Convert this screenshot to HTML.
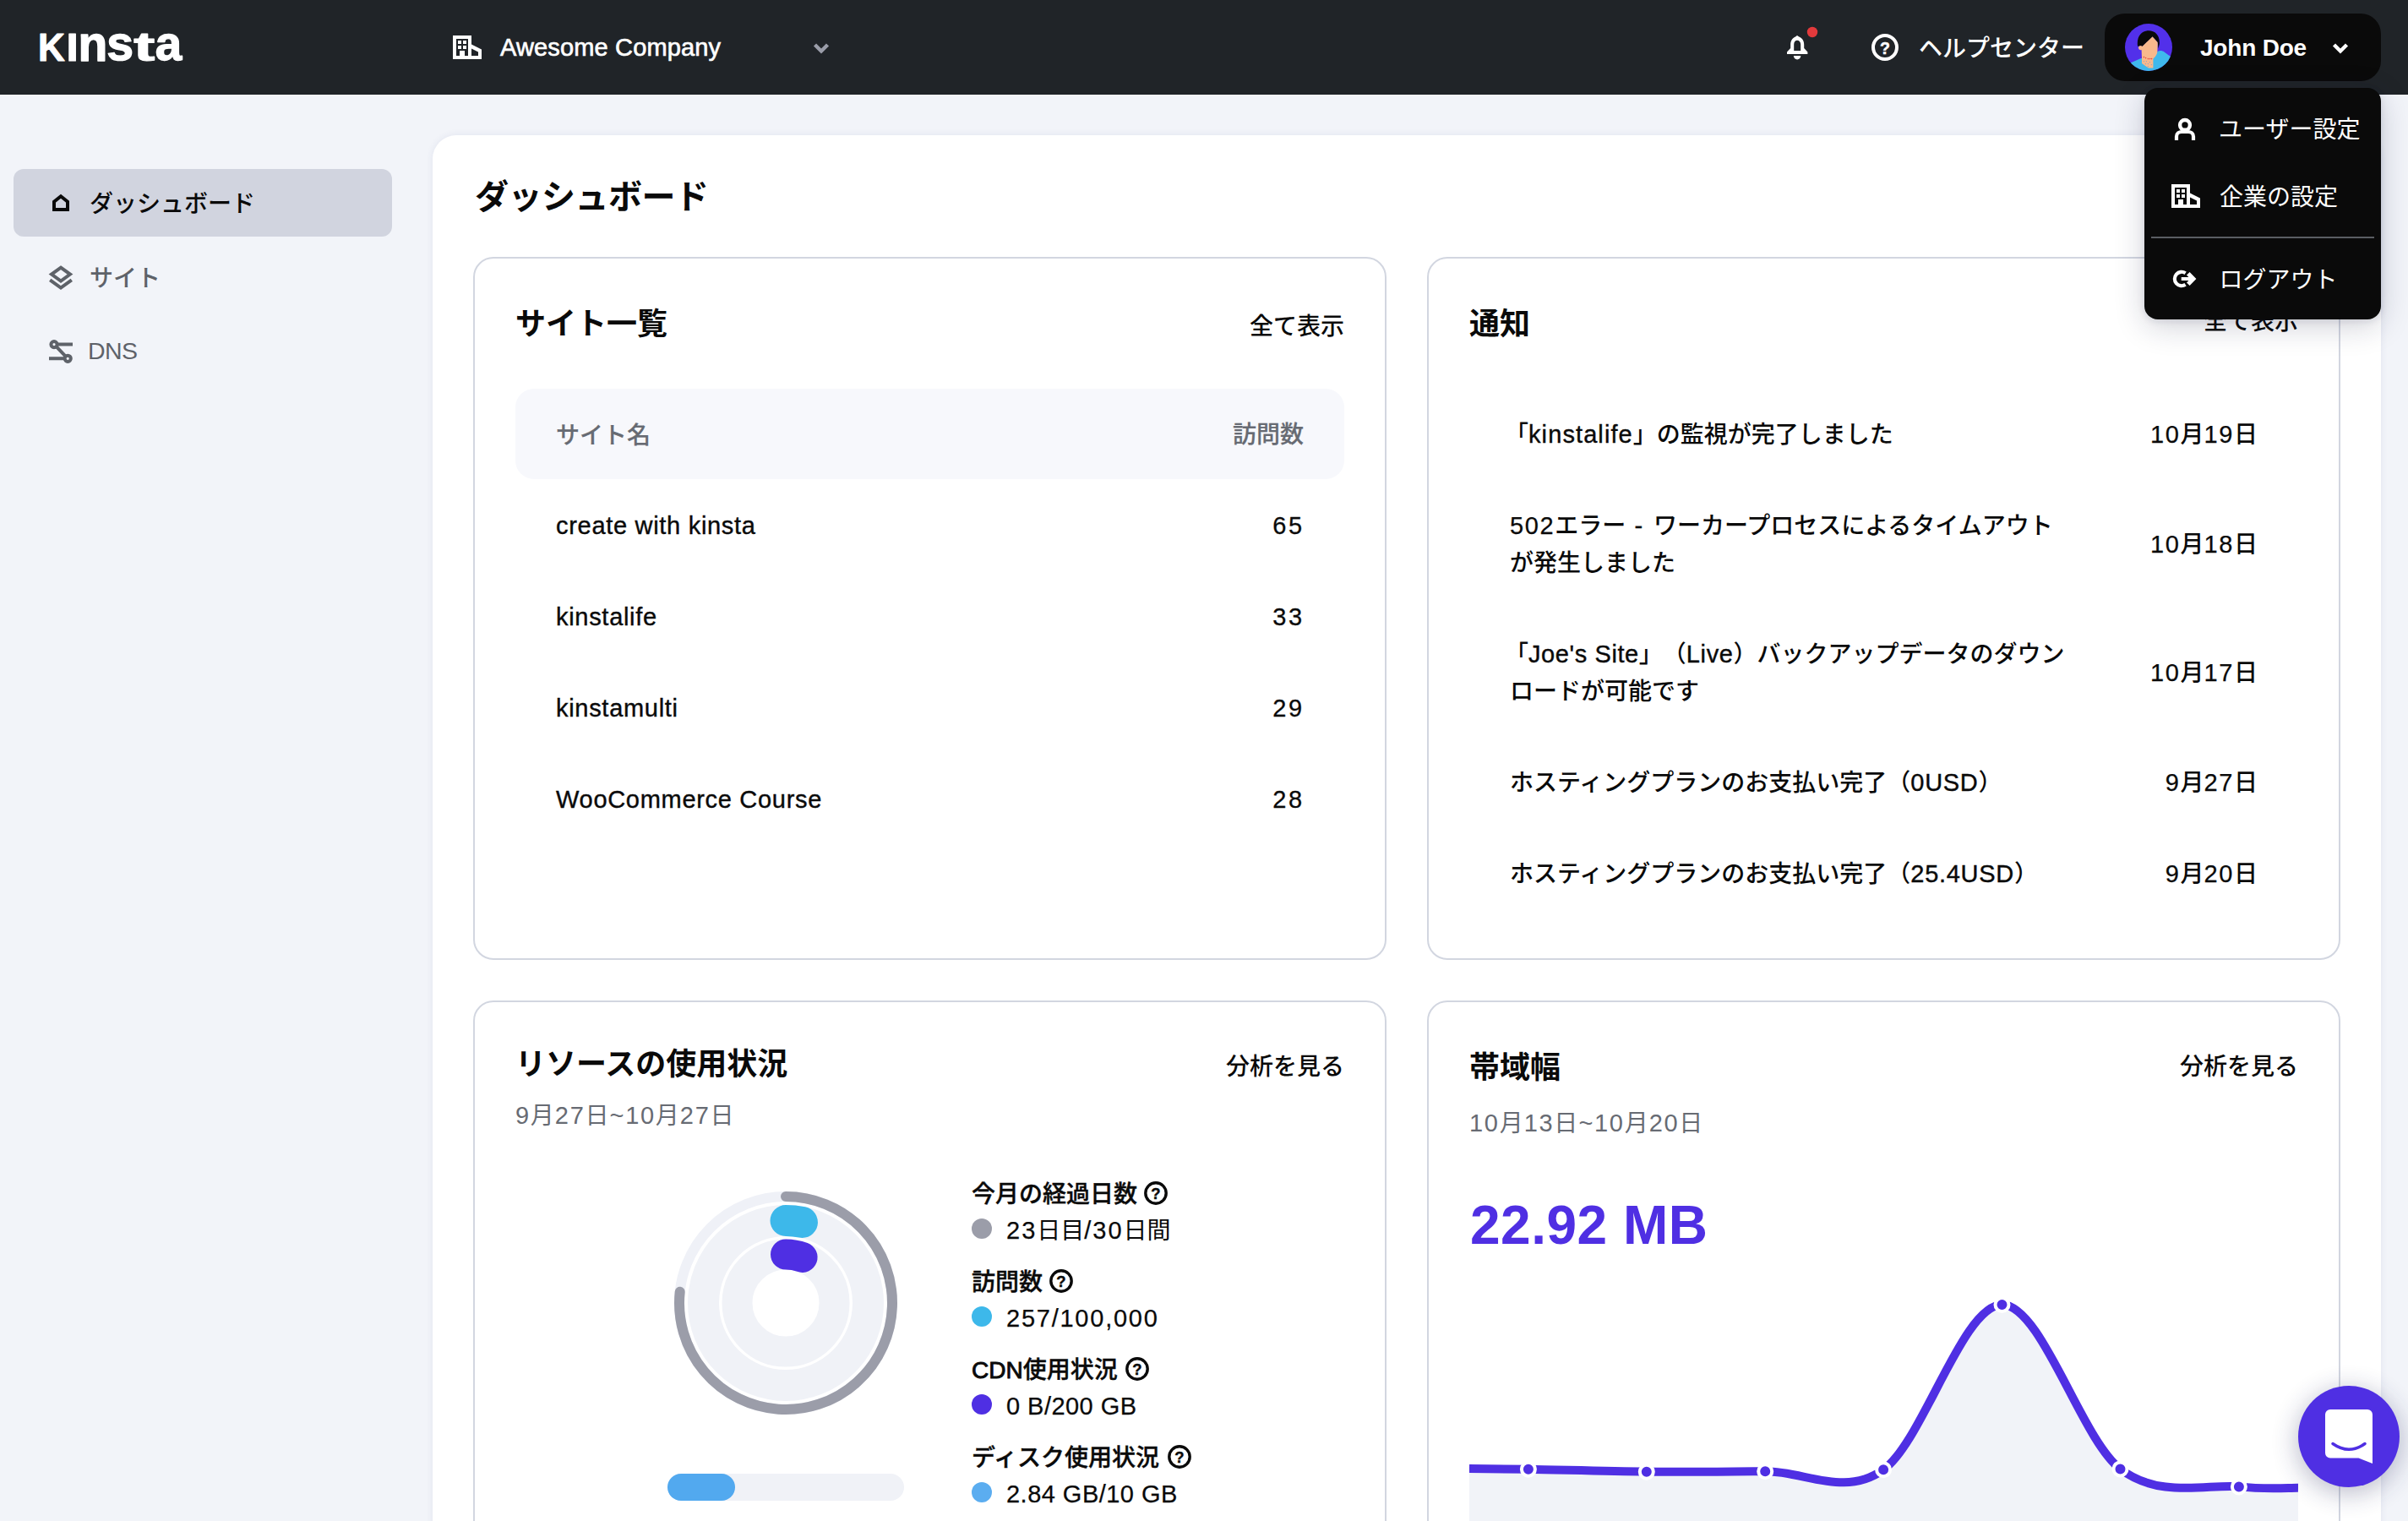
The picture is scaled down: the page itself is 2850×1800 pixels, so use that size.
<!DOCTYPE html>
<html lang="ja">
<head>
<meta charset="utf-8">
<title>MyKinsta ダッシュボード</title>
<style>
*{box-sizing:border-box;margin:0;padding:0}
html,body{width:2850px;height:1800px;overflow:hidden}
body{text-spacing-trim:space-all;background:#f2f4f9;font-family:"Liberation Sans","Noto Sans CJK JP",sans-serif;color:#0a0a0a;font-size:28px;position:relative;-webkit-font-smoothing:antialiased}
#app{position:relative;width:2850px;height:1800px;overflow:hidden}
.abs{position:absolute}
.l{font-size:29px;letter-spacing:.7px;-webkit-text-stroke:.4px currentColor}
.n{font-size:29px;letter-spacing:2.6px;margin-right:-.8px;-webkit-text-stroke:.3px currentColor}
.d{font-size:29px;letter-spacing:1.6px;-webkit-text-stroke:.25px currentColor}
/* header */
#hdr{position:absolute;left:0;top:0;width:2850px;height:112px;background:#202428;z-index:5}
#hdr .t{position:absolute;color:#fff;white-space:nowrap;line-height:40px;height:40px}
#pill{position:absolute;left:2491px;top:16px;width:327px;height:80px;border-radius:24px;background:#0a0a0a}
/* dropdown */
#dd{position:absolute;left:2538px;top:104px;width:280px;height:274px;border-radius:16px;background:#0a0a0a;z-index:9;box-shadow:0 8px 36px rgba(20,24,60,.2),0 2px 8px rgba(20,24,60,.1)}
#dd .t{position:absolute;left:89px;color:#fff;white-space:nowrap;line-height:40px;height:40px;font-weight:400}
#dd .hr{position:absolute;left:8px;top:176px;width:264px;height:2px;background:#5a5d63}
/* sidebar */
.nav{position:absolute;left:16px;width:448px;height:80px;border-radius:12px}
.nav.on{background:#d1d4df}
.nav .t{position:absolute;left:90px;top:22px;line-height:40px;white-space:nowrap;font-weight:500;color:#5e6269}
.nav.on .t{color:#0a0a0a}
.nav svg{position:absolute}
/* panel */
#panel{position:absolute;left:512px;top:160px;width:2306px;height:1700px;background:#fff;border-radius:28px 28px 0 0;box-shadow:0 0 8px rgba(60,70,130,.09)}
h1{position:absolute;left:50px;top:47px;font-size:40px;line-height:52px;font-weight:700;white-space:nowrap;letter-spacing:-.5px}
.card{position:absolute;width:1081px;border:2px solid #d2d6e0;border-radius:24px;background:#fff}
.card h2{position:absolute;left:48px;font-size:36px;line-height:48px;font-weight:700;white-space:nowrap}
.card .link{position:absolute;right:48px;font-size:28px;line-height:40px;font-weight:500;white-space:nowrap}
.sub{position:absolute;left:48px;color:#676b73;font-size:28px;line-height:40px;white-space:nowrap;letter-spacing:1px}
.sub .l{letter-spacing:1.7px;-webkit-text-stroke:0}
.row{position:absolute;left:48px;width:981px}
.row .a{position:absolute;left:48px;white-space:nowrap;line-height:44px;font-weight:500}
.row .b{position:absolute;right:48px;white-space:nowrap;line-height:44px;font-weight:500;text-align:right}
.th{background:#f7f8fc;border-radius:22px;height:107px}
.th .a,.th .b{color:#676b73;font-weight:500;-webkit-text-stroke:.2px #676b73}
.lg{position:absolute;left:588px;white-space:nowrap;line-height:40px}
.lg.h{font-weight:500;-webkit-text-stroke:.4px #0a0a0a;margin-top:2px}
.lg.v{left:629px;font-size:28px}
.lg.v span{font-size:29px;-webkit-text-stroke:.25px currentColor}
.dot{position:absolute;left:588px;width:24px;height:24px;border-radius:50%}
.q{position:absolute;width:28px;height:28px}
</style>
</head>
<body>
<div id="app">

<!-- ================= HEADER ================= -->
<div id="hdr">
  <svg class="abs" style="left:46px;top:36px" width="174" height="40" viewBox="0 0 174 40" id="logo"><g font-family="Liberation Sans, sans-serif" font-weight="700" fill="#fff" stroke="#fff" stroke-width="2.4" stroke-linejoin="round"><text transform="translate(-0.94 36.00) scale(0.4394 0.4571)" font-size="100">K</text><text transform="translate(32.62 36.00) scale(0.5125 0.4571)" font-size="100">I</text><text transform="translate(46.48 36.00) scale(0.5694 0.5926)" font-size="100">n</text><text transform="translate(80.29 35.42) scale(0.5714 0.5818)" font-size="100">s</text><text transform="translate(112.25 35.52) scale(0.7500 0.4776)" font-size="100">t</text><text transform="translate(137.87 35.42) scale(0.5655 0.5818)" font-size="100">a</text></g></svg>
  <svg class="abs" style="left:536px;top:42px" width="34" height="28" viewBox="0 0 34 28"><path fill="#fff" fill-rule="evenodd" d="M0 0H22V10.5L34 16.5V28H0ZM4 4V24H8V18H14V24H18V4ZM6 6H10V10H6ZM12 6H16V10H12ZM6 12H10V16H6ZM12 12H16V16H12ZM22 15.6V24H30V19.6Z"/></svg>
  <div class="t" style="left:592px;top:36px;font-size:29px;letter-spacing:.15px;-webkit-text-stroke:.65px #fff">Awesome Company</div>
  <svg class="abs" style="left:961px;top:49px" width="22" height="16" viewBox="0 0 22 16"><path d="M3.5 4 L11 11.5 L18.5 4" fill="none" stroke="#9a9da9" stroke-width="4.4"/></svg>

  <svg class="abs" style="left:2112px;top:30px" width="44" height="44" viewBox="0 0 44 44">
    <path fill="#fff" fill-rule="evenodd" d="M15 12 L13 13.6 C8.6 15.6 7.2 19 7.2 23 V27 L3 31.6 V34 H27.4 V31.600000000000001 L23.2 27 V23 C23.2 19 21.8 15.6 17.2 13.6 Z M11.2 30 V22.6 C11.2 19.6 13 17.8 15.1 17.8 C17.2 17.8 19.2 19.6 19.2 22.6 V30 Z"/>
    <path fill="#fff" d="M10.8 36 H19.4 C19.2 38.6 17.4 40.4 15.1 40.4 C12.8 40.4 11 38.6 10.8 36 Z"/>
    <circle cx="33" cy="8" r="6.2" fill="#e23a3c"/>
  </svg>

  <svg class="abs" style="left:2215px;top:40px" width="32" height="32" viewBox="0 0 32 32"><circle cx="16" cy="16" r="14" fill="none" stroke="#fff" stroke-width="4"/><text x="16" y="23.6" text-anchor="middle" font-family="Liberation Sans, sans-serif" font-weight="700" font-size="19.5" fill="#fff" stroke="#fff" stroke-width=".5">?</text></svg>
  <div class="t" style="left:2271px;top:38px;font-weight:500">ヘルプセンター</div>

  <div id="pill"></div>
  <svg class="abs" style="left:2515px;top:28px" width="56" height="56" viewBox="0 0 56 56" id="avatar">
    <defs><clipPath id="avc"><circle cx="28" cy="28" r="28"/></clipPath></defs>
    <g clip-path="url(#avc)">
      <rect width="56" height="56" fill="#5230ea"/>
      <path fill="#3fb9ec" d="M-2 50 L19 41 L34 40 L38.5 33 C41 31.5 44.5 32 46.5 33.5 L58 42 V58 H-2Z"/>
      <path fill="#f8b98c" d="M32.6 15 L20.5 26.5 C18.5 25.3 16 26.3 16 28.6 C16 30.6 18 31.8 19.6 31 L20 41 V47 L28 52.6 L33.4 52.6 V41.5 C36 39.6 38 36.5 38.4 33 L38.8 22 Z"/>
      <path fill="#0a0a0a" d="M15 26.5 C13.5 15 20 8.3 28 8.3 C36 8.300000000000001 41.5 14 40.8 24 L39.4 29.6 L38.8 22 L32.6 15.2 L20.6 26.8 C19 25.6 17 25.6 15.8 27 Z"/>
      <g fill="#e8423f"><circle cx="22.4" cy="39.6" r=".8"/><circle cx="24.6" cy="40.6" r=".8"/><circle cx="27.4" cy="41.6" r=".8"/><circle cx="29.6" cy="41.6" r=".8"/><circle cx="31.6" cy="41.6" r=".8"/></g>
      <g fill="#8fa3c4"><circle cx="22.4" cy="44.6" r=".7"/><circle cx="25.4" cy="44.6" r=".7"/><circle cx="29.4" cy="45.6" r=".7"/><circle cx="24.4" cy="47.6" r=".7"/><circle cx="27.4" cy="47.6" r=".7"/><circle cx="31.4" cy="48.6" r=".7"/><circle cx="27.4" cy="50.6" r=".7"/></g>
    </g>
  </svg>
  <div class="t" style="left:2604px;top:37px;font-weight:700;letter-spacing:-.2px">John Doe</div>
  <svg class="abs" style="left:2759px;top:49px" width="22" height="16" viewBox="0 0 22 16"><path d="M3.5 4 L11 11.5 L18.5 4" fill="none" stroke="#fff" stroke-width="4.4"/></svg>
</div>

<!-- ================= USER DROPDOWN ================= -->
<div id="dd">
  <svg class="abs" style="left:34px;top:34px" width="28" height="30" viewBox="0 0 28 30"><circle cx="14" cy="9.9" r="5.9" fill="none" stroke="#fff" stroke-width="4.4"/><path d="M4 28 V23.5 C4 20 7 18 10 18 H18 C21 18 24 20 24 23.5 V28" fill="none" stroke="#fff" stroke-width="4.2"/></svg>
  <div class="t" style="top:30px;left:88px">ユーザー設定</div>
  <svg class="abs" style="left:32px;top:114px" width="34" height="28" viewBox="0 0 34 28"><path fill="#fff" fill-rule="evenodd" d="M0 0H22V10.5L34 16.5V28H0ZM4 4V24H8V18H14V24H18V4ZM6 6H10V10H6ZM12 6H16V10H12ZM6 12H10V16H6ZM12 12H16V16H12ZM22 15.6V24H30V19.6Z"/></svg>
  <div class="t" style="top:110px">企業の設定</div>
  <div class="hr"></div>
  <svg class="abs" style="left:32px;top:212px" width="32" height="28" viewBox="0 0 32 28"><path d="M16.59 7.2 A8.2 8.2 0 1 0 16.59 20.8" fill="none" stroke="#fff" stroke-width="4.1"/><path fill="#fff" d="M11.7 12 H20.4 L18 9.6 L21.6 6.1 L29.4 14 L21.6 22 L18 18.4 L20.4 16 H11.7Z"/></svg>
  <div class="t" style="top:207.5px;left:88.5px">ログアウト</div>
</div>

<!-- ================= SIDEBAR ================= -->
<div class="nav on" style="top:200px">
  <svg style="left:44px;top:28px" width="24" height="24" viewBox="0 0 24 24"><path d="M4 20 V10.6 L12 4.2 L20 10.6 V20 Z" fill="none" stroke="#0a0a0a" stroke-width="4"/></svg>
  <div class="t">ダッシュボード</div>
</div>
<div class="nav" style="top:288px">
  <svg style="left:40px;top:24px" width="32" height="32" viewBox="0 0 32 32"><path d="M16 4.6 L27 12.6 L16 20.6 L5 12.6 Z" fill="none" stroke="#5e6269" stroke-width="4"/><path d="M3.2 19.4 L16 28.6 L28.8 19.4" fill="none" stroke="#5e6269" stroke-width="4"/></svg>
  <div class="t">サイト</div>
</div>
<div class="nav" style="top:376px">
  <svg style="left:40px;top:24px" width="32" height="32" viewBox="0 0 32 32"><g fill="none" stroke="#5e6269" stroke-width="4"><circle cx="8" cy="7.6" r="3.6"/><circle cx="24.2" cy="24.3" r="3.6"/><path d="M11.6 7.4 H30 M2 24.3 H20.6 M10.6 10.2 L21.6 21.6"/></g></svg>
  <div class="t" style="font-size:28.5px;letter-spacing:-.6px;left:88px;top:19px">DNS</div>
</div>

<!-- ================= MAIN PANEL ================= -->
<div id="panel">
  <h1>ダッシュボード</h1>

  <!-- card 1 : sites -->
  <div class="card" style="left:48px;top:144px;height:832px">
    <h2 style="top:54px">サイト一覧</h2>
    <div class="link" style="top:61px">全て表示</div>
    <div class="row th" style="top:154px"><div class="a" style="top:33.5px">サイト名</div><div class="b" style="top:33px">訪問数</div></div>
    <div class="row" style="top:262px;height:108px"><div class="a l" style="top:32px">create with kinsta</div><div class="b" style="top:32px"><span class="n">65</span></div></div>
    <div class="row" style="top:370px;height:108px"><div class="a l" style="top:32px">kinstalife</div><div class="b" style="top:32px"><span class="n">33</span></div></div>
    <div class="row" style="top:478px;height:108px"><div class="a l" style="top:32px">kinstamulti</div><div class="b" style="top:32px"><span class="n">29</span></div></div>
    <div class="row" style="top:586px;height:108px"><div class="a l" style="top:32px">WooCommerce Course</div><div class="b" style="top:32px"><span class="n">28</span></div></div>
  </div>

  <!-- card 2 : notifications -->
  <div class="card" style="left:1177px;top:144px;height:832px">
    <h2 style="top:54px">通知</h2>
    <div class="link" style="top:55px">全て表示</div>
    <div class="row" style="top:154px;height:108px"><div class="a" style="top:32px;left:42px">「<span class="l" style="letter-spacing:1.1px">kinstalife</span>」の監視が完了しました</div><div class="b" style="top:32px"><span class="d">10</span>月<span class="d">19</span>日</div></div>
    <div class="row" style="top:262px;height:152px"><div class="a" style="top:32px"><span class="d">502</span>エラー<span class="l" style="letter-spacing:2.3px"> - </span>ワーカープロセスによるタイムアウト<br>が発生しました</div><div class="b" style="top:54px"><span class="d">10</span>月<span class="d">18</span>日</div></div>
    <div class="row" style="top:414px;height:152px"><div class="a" style="top:32px;text-indent:-6px">「<span class="l" style="letter-spacing:.6px">Joe's Site</span>」（<span class="l" style="letter-spacing:.6px">Live</span>）バックアップデータのダウン<br>ロードが可能です</div><div class="b" style="top:54px"><span class="d">10</span>月<span class="d">17</span>日</div></div>
    <div class="row" style="top:566px;height:108px"><div class="a" style="top:32px">ホスティングプランのお支払い完了（<span class="l">0USD</span>）</div><div class="b" style="top:32px"><span class="d">9</span>月<span class="d">27</span>日</div></div>
    <div class="row" style="top:674px;height:108px"><div class="a" style="top:32px">ホスティングプランのお支払い完了（<span class="l">25.4USD</span>）</div><div class="b" style="top:32px"><span class="d">9</span>月<span class="d">20</span>日</div></div>
  </div>

  <!-- card 3 : resource usage -->
  <div class="card" style="left:48px;top:1024px;height:760px">
    <h2 style="top:50px">リソースの使用状況</h2>
    <div class="link" style="top:56.5px">分析を見る</div>
    <div class="sub" style="top:114px"><span class="l">9</span>月<span class="l">27</span>日<span class="l">~10</span>月<span class="l">27</span>日</div>
    <svg class="abs" style="left:228px;top:216px" width="280" height="280" viewBox="0 0 280 280"><g fill="none" stroke-linecap="round">
<circle cx="140" cy="140" r="126" stroke="#eff1f7" stroke-width="12"/><circle cx="140" cy="140" r="97.5" stroke="#f0f2f7" stroke-width="37"/><circle cx="140" cy="140" r="57.5" stroke="#f0f2f7" stroke-width="36"/>
<path d="M140.00 14.00 A126 126 0 1 1 14.69 126.83" stroke="#9b9da9" stroke-width="12"/>
<path d="M140.00 42.50 A97.5 97.5 0 0 1 159.44 44.46" stroke="#3db8ea" stroke-width="37"/>
<path d="M140.00 82.50 A57.5 57.5 0 0 1 159.57 85.93" stroke="#4f2fe3" stroke-width="36"/></g></svg>
    <div class="abs" style="left:228px;top:558px;width:280px;height:32px;border-radius:16px;background:#f0f2f7"><div style="width:80px;height:32px;border-radius:16px;background:#52a9ef"></div></div>
<div class="lg h" style="top:206px">今月の経過日数</div><svg class="q" style="left:791.7px;top:212px" viewBox="0 0 28 28"><circle cx="14" cy="14" r="12.2" fill="none" stroke="#0a0a0a" stroke-width="3.4"/><text x="14" y="20.6" text-anchor="middle" font-family="Liberation Sans, sans-serif" font-weight="700" font-size="18.5" fill="#0a0a0a" stroke="#0a0a0a" stroke-width=".4">?</text></svg><span class="dot" style="top:256px;background:#9b9da9"></span><div class="lg v" style="top:250px"><span style="letter-spacing:2px">23</span>日目<span style="letter-spacing:2px">/30</span>日間</div>
<div class="lg h" style="top:310px">訪問数</div><svg class="q" style="left:680px;top:316px" viewBox="0 0 28 28"><circle cx="14" cy="14" r="12.2" fill="none" stroke="#0a0a0a" stroke-width="3.4"/><text x="14" y="20.6" text-anchor="middle" font-family="Liberation Sans, sans-serif" font-weight="700" font-size="18.5" fill="#0a0a0a" stroke="#0a0a0a" stroke-width=".4">?</text></svg><span class="dot" style="top:360px;background:#3db8ea"></span><div class="lg v" style="top:354px"><span style="letter-spacing:1.76px">257/100,000</span></div>
<div class="lg h" style="top:414px"><b style="font-weight:400;-webkit-text-stroke:.9px #0a0a0a">CDN</b>使用状況</div><svg class="q" style="left:770px;top:420px" viewBox="0 0 28 28"><circle cx="14" cy="14" r="12.2" fill="none" stroke="#0a0a0a" stroke-width="3.4"/><text x="14" y="20.6" text-anchor="middle" font-family="Liberation Sans, sans-serif" font-weight="700" font-size="18.5" fill="#0a0a0a" stroke="#0a0a0a" stroke-width=".4">?</text></svg><span class="dot" style="top:464px;background:#4f2fe3"></span><div class="lg v" style="top:458px"><span style="letter-spacing:.46px">0 B/200 GB</span></div>
<div class="lg h" style="top:518px">ディスク使用状況</div><svg class="q" style="left:819.8px;top:524px" viewBox="0 0 28 28"><circle cx="14" cy="14" r="12.2" fill="none" stroke="#0a0a0a" stroke-width="3.4"/><text x="14" y="20.6" text-anchor="middle" font-family="Liberation Sans, sans-serif" font-weight="700" font-size="18.5" fill="#0a0a0a" stroke="#0a0a0a" stroke-width=".4">?</text></svg><span class="dot" style="top:568px;background:#5badf0"></span><div class="lg v" style="top:562px"><span style="letter-spacing:.47px">2.84 GB/10 GB</span></div>
  </div>

  <!-- card 4 : bandwidth -->
  <div class="card" style="left:1177px;top:1024px;height:760px;overflow:hidden">
    <h2 style="top:54px">帯域幅</h2>
    <div class="link" style="top:56.5px">分析を見る</div>
    <div class="sub" style="top:123px"><span class="l">10</span>月<span class="l">13</span>日<span class="l">~10</span>月<span class="l">20</span>日</div>
    <div class="abs" style="left:48px;top:232px;font-size:64px;line-height:64px;font-weight:700;color:#4f2fe3;white-space:nowrap;letter-spacing:.5px;margin-left:1px">22.92 MB</div>
    <svg class="abs" style="left:48px;top:294px" width="981" height="340" viewBox="0 0 981 340"><path d="M0.0 257.9 C11.7 258.0 34.9 258.2 69.9 258.8 C104.9 259.4 163.1 261.3 209.8 261.7 C256.5 262.1 303.5 261.6 350.2 261.2 C396.9 260.8 443.4 292.2 490.1 259.3 C536.8 226.4 583.8 64.2 630.5 64.0 C677.2 63.8 723.8 222.5 770.5 258.4 C817.2 294.3 875.8 275.7 910.9 279.4 C946.0 283.1 969.3 280.6 981.0 280.8 V340 H0 Z" fill="#f1f3f8"/><path d="M0.0 257.9 C11.7 258.0 34.9 258.2 69.9 258.8 C104.9 259.4 163.1 261.3 209.8 261.7 C256.5 262.1 303.5 261.6 350.2 261.2 C396.9 260.8 443.4 292.2 490.1 259.3 C536.8 226.4 583.8 64.2 630.5 64.0 C677.2 63.8 723.8 222.5 770.5 258.4 C817.2 294.3 875.8 275.7 910.9 279.4 C946.0 283.1 969.3 280.6 981.0 280.8" fill="none" stroke="#4f2fe3" stroke-width="10"/><g fill="#4f2fe3" stroke="#fff" stroke-width="4"><circle cx="69.9" cy="258.8" r="8"/><circle cx="209.8" cy="261.7" r="8"/><circle cx="350.2" cy="261.2" r="8"/><circle cx="490.1" cy="259.3" r="8"/><circle cx="630.5" cy="64" r="8"/><circle cx="770.5" cy="258.4" r="8"/><circle cx="910.9" cy="279.4" r="8"/></g></svg>
  </div>

</div>

<!-- ================= CHAT BUTTON ================= -->
<svg class="abs" style="left:2660px;top:1580px;z-index:8" width="240" height="240" viewBox="0 0 240 240">
  <defs><filter id="cs" x="-50%" y="-50%" width="200%" height="200%"><feGaussianBlur stdDeviation="15"/></filter></defs>
  <circle cx="120" cy="126" r="62" fill="#252a5c" opacity=".3" filter="url(#cs)"/>
  <circle cx="120" cy="120" r="60" fill="#4f2fe3"/>
  <path fill="#fff" d="M98 88 H142 A6 6 0 0 1 148 94 V152 L131.5 145.4 H98 A6 6 0 0 1 92 139.4 V94 A6 6 0 0 1 98 88Z"/>
  <path d="M101 128.5 Q120 142 139 128.5" fill="none" stroke="#4f2fe3" stroke-width="3.4" stroke-linecap="round"/>
</svg>

</div>
<script>(function(){var w=window.innerWidth;if(w&&Math.abs(w-2850)>1){document.documentElement.style.zoom=w/2850;}})();</script>
</body>
</html>
